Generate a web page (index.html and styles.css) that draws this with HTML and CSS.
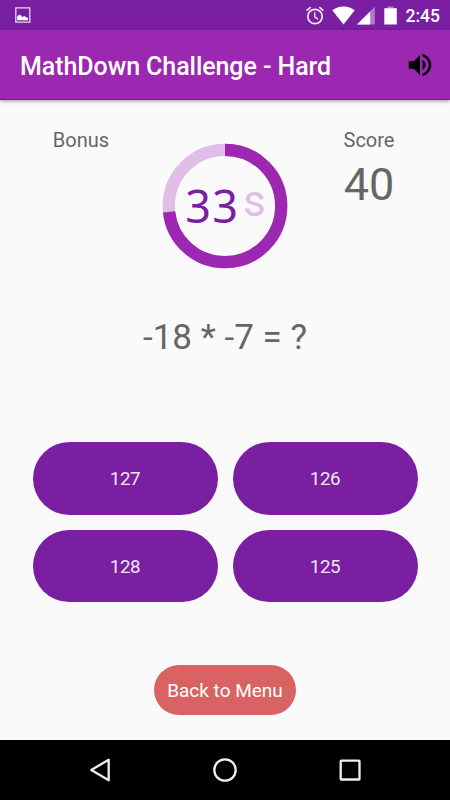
FILE: index.html
```html
<!DOCTYPE html>
<html lang="en">
  <head>
    <meta charset="utf-8">
    <title>MathDown Challenge</title>
    <link rel="stylesheet" href="styles.css">
  </head>
  <body>
    <div class="status-bar">
      <svg class="icon-picture" width="16" height="16" viewBox="0 0 16 16">
        <path fill="none" stroke="#e9d5f0" stroke-width="1.3" d="M.8.8h14v14.4H.8z" />
        <path fill="#fff" d="M2.2 13.3V9.4l2-1.6 1.5.3 1.4 1.9 1.8-.8 1.5.2 1.2 1.2 1.4.4v2.3z" />
      </svg>
      <div class="status-icons">
        <svg width="18" height="19" viewBox="0 0 18 19" fill="none" stroke="#f3e6f7">
          <circle cx="9" cy="10.5" r="7.2" stroke-width="1.7" />
          <path stroke-width="1.4" d="M8.7 6.3v4.6l3.3 2.4" />
          <path stroke-width="1.8" d="M.6 4.6 4.7 1.1M17.4 4.6l-4.1-3.5" />
        </svg>
        <svg class="icon-wifi" width="23" height="19" viewBox="0 0 23 19">
          <path fill="#fff" d="M11.5 18.6.3 4.2C3.300 1.800 7.100.4 11.500.4s8.200 1.400 11.200 3.800z" />
        </svg>
        <svg class="icon-signal" width="18" height="19" viewBox="0 0 18 19">
          <path fill="#b07cc6" d="M0 18.5 17.8.8v17.7z" />
          <path fill="#fff" d="M0 18.5 13.2 5.4v13.1z" />
        </svg>
        <svg class="icon-battery" width="13" height="19" viewBox="0 0 13 19">
          <path fill="#b07cc6" d="M3.5.4h6v1.8h-6z" />
          <path fill="#fff" d="M.3 2.2h12.5v16.3H.3z" />
        </svg>
        <span class="clock">2:45</span>
      </div>
    </div>
    <div class="app-bar">
      <h1>MathDown Challenge - Hard</h1>
      <button id="btn-sound">
        <svg width="30" height="30" viewBox="0 0 24 24">
          <path d="M3 9v6h4l5 5V4L7 9H3zm13.5 3c0-1.77-1.02-3.29-2.5-4.03v8.05c1.48-.73 2.5-2.25 2.5-4.02zM14 3.23v2.06c2.89.86 5 3.54 5 6.71s-2.11 5.85-5 6.71v2.06c4.01-.91 7-4.49 7-8.77s-2.99-7.86-7-8.77z" />
        </svg>
      </button>
    </div>
    <div class="content">
      <div class="scores">
        <div class="score-box">
          <span class="label">Bonus</span>
        </div>
        <div class="timer">
          <svg width="126" height="126" viewBox="-63 -63 126 126">
            <circle class="ring" r="56.2" />
            <circle class="ring ring-left" r="56.2" pathLength="60" stroke-dasharray="44 16" transform="rotate(-90)" />
          </svg>
          <div class="timer-text"><span class="seconds">33</span><span class="unit">s</span></div>
        </div>
        <div class="score-box">
          <span class="label">Score</span>
          <span class="value">40</span>
        </div>
      </div>
      <div class="question">-18 * -7 = ?</div>
      <div class="answers">
        <button>127</button>
        <button>126</button>
        <button>128</button>
        <button>125</button>
      </div>
      <button id="btn-back">Back to Menu</button>
    </div>
    <div class="nav-bar">
      <svg width="30" height="30" viewBox="0 0 30 30">
        <path d="M23.7 4.7v20.6L6.3 15z" />
      </svg>
      <svg width="30" height="30" viewBox="0 0 30 30">
        <circle cx="15" cy="15" r="10.7" />
      </svg>
      <svg width="30" height="30" viewBox="0 0 30 30">
        <rect x="5.7" y="5.7" width="18.8" height="18.8" rx=".5" />
      </svg>
    </div>
  </body>
</html>
```

FILE: styles.css
```css
* {
  box-sizing: border-box;
}
html {
  height: 100%;
}
body {
  margin: 0;
  height: 100%;
  display: flex;
  flex-direction: column;
  overflow: hidden;
  font-family: Roboto, sans-serif;
  background-color: #fafafa;
  color: #666;
}
button {
  border: none;
  padding: 0;
  font-family: inherit;
  cursor: pointer;
}
svg {
  display: block;
}
.status-bar {
  flex: none;
  height: 30px;
  padding: 0 10px 0 15px;
  display: flex;
  justify-content: space-between;
  align-items: center;
  background-color: #7b1fa2;
}
.status-icons {
  display: flex;
  align-items: center;
}
.icon-wifi {
  margin-left: 8px;
}
.icon-signal {
  margin-left: 2px;
}
.icon-battery {
  margin-left: 9px;
}
.clock {
  margin-left: 9px;
  font-size: 17.5px;
  font-weight: 500;
  line-height: 30px;
  padding-top: 1px;
  color: #fff;
}
.app-bar {
  flex: none;
  height: 70px;
  padding: 0 15px 0 20px;
  display: flex;
  justify-content: space-between;
  align-items: center;
  background-color: #9c27b0;
  border-bottom: 1px solid #8a0f9f;
  box-shadow: 0 1px 4px rgba(0, 0, 0, 0.4);
}
.app-bar h1 {
  margin: 5px 0 0;
  font-size: 25px;
  font-weight: 500;
  line-height: 30px;
  letter-spacing: -0.07px;
  color: #fff;
}
#btn-sound {
  background-color: transparent;
}
.content {
  flex: 1;
  display: flex;
  flex-direction: column;
  align-items: center;
}
.scores {
  width: 100%;
  height: 210px;
  padding: 28px 31px 0;
  display: grid;
  grid-template-columns: 100px 1fr 100px;
}
.score-box {
  display: flex;
  flex-direction: column;
  align-items: center;
}
.label {
  font-size: 20px;
  line-height: 24px;
}
.value {
  font-size: 45px;
  line-height: 52px;
  margin-top: 7px;
}
.timer {
  display: grid;
  place-items: center;
  align-self: start;
  margin-top: 15px;
}
.timer > * {
  grid-area: 1 / 1;
}
.ring {
  fill: none;
  stroke: #e1bee7;
  stroke-width: 12.3;
}
.ring-left {
  stroke: #9c27b0;
}
.timer-text {
  display: flex;
  line-height: 60px;
  padding-left: 1px;
}
.seconds {
  font-family: "Noto Sans", sans-serif;
  font-size: 45px;
  letter-spacing: 1.2px;
  color: #7b1fa2;
}
.unit {
  margin-left: 4px;
  margin-top: -5px;
  font-size: 44px;
  color: #e1bee7;
}
.question {
  font-size: 35px;
  line-height: 42px;
  margin-top: 7px;
}
.answers {
  width: 385px;
  margin-top: 83px;
  display: grid;
  grid-template-columns: 1fr 1fr;
  gap: 15px;
}
.answers button {
  height: 72.5px;
  padding-top: 2px;
  border-radius: 36.5px;
  font-size: 18.75px;
  letter-spacing: -0.3px;
  color: #f3e6f7;
  background-color: #7b1fa2;
}
#btn-back {
  width: 142px;
  height: 50px;
  margin-top: 63px;
  border-radius: 25px;
  font-size: 19px;
  padding-top: 1px;
  color: #fff;
  background-color: #d96262;
}
.nav-bar {
  flex: none;
  height: 60px;
  padding: 0 85px;
  display: flex;
  justify-content: space-between;
  align-items: center;
  background-color: #000;
}
.nav-bar svg {
  fill: none;
  stroke: #eee;
  stroke-width: 2.3;
  stroke-linejoin: round;
}
```
